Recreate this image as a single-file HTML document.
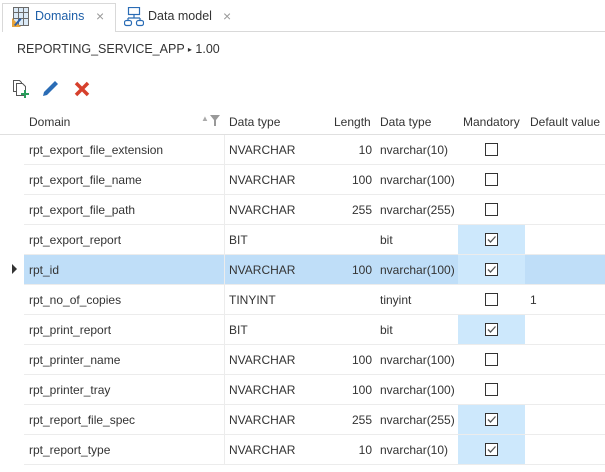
<!DOCTYPE html>
<html><head><meta charset="utf-8"><style>
*{margin:0;padding:0;box-sizing:border-box}
body{width:605px;height:472px;background:#fff;font-family:"Liberation Sans",sans-serif;font-size:12px;color:#333;position:relative;overflow:hidden}
.a{position:absolute;white-space:nowrap}
.row{position:absolute;left:24px;width:581px;height:30px;border-bottom:1px solid #ececec}
.row span{position:absolute;top:8px;white-space:nowrap}
.vl{position:absolute;left:224px;top:135px;width:1px;height:330px;background:#ececec}
.m{position:absolute;left:434px;width:67px;height:29px;background:#cde8fc}
.cb{position:absolute;left:461px;top:8px;width:13px;height:13px;border:1px solid #333;background:#fff}
.ck{position:absolute;left:1px;top:1px}
</style></head><body>
<!-- tabs -->
<div class="a" style="left:2px;top:3px;width:114px;height:29px;border:1px solid #d9d9d9;border-bottom:none;background:#fff"></div>
<div class="a" style="left:116px;top:31px;width:489px;height:1px;background:#d9d9d9"></div>
<svg class="a" style="left:11px;top:6px" width="20" height="22" viewBox="0 0 20 22">
<rect x="2.5" y="1.5" width="15" height="18" fill="#dbeaf7" stroke="#6a6a6a"/>
<line x1="7.5" y1="1.5" x2="7.5" y2="19.5" stroke="#6a6a6a"/><line x1="12.5" y1="1.5" x2="12.5" y2="19.5" stroke="#6a6a6a"/>
<line x1="2.5" y1="6.5" x2="17.5" y2="6.5" stroke="#6a6a6a"/><line x1="2.5" y1="12.5" x2="17.5" y2="12.5" stroke="#6a6a6a"/>
<path d="M1 21 L1 12 L10 21Z" fill="#e8a33a"/><path d="M3 19 L9 12 L10.5 13.5 L4.5 20Z" fill="#2a5fa8"/>
</svg>
<div class="a" style="left:35px;top:9px;color:#1e5fa8;font-size:12.5px">Domains</div>
<div class="a" style="left:96px;top:8px;color:#999;font-size:14px">×</div>
<svg class="a" style="left:124px;top:7px" width="20" height="20" viewBox="0 0 20 20" fill="none" stroke="#2a6cb5" stroke-width="1.2">
<rect x="4.5" y="0.5" width="11" height="7"/><path d="M10 7.5V11M4 11H16M4 11V13M16 11V13"/>
<rect x="0.5" y="13.5" width="7" height="5" rx="2"/><rect x="12.5" y="13.5" width="7" height="5" rx="2"/>
</svg>
<div class="a" style="left:148px;top:9px;font-size:12.5px">Data model</div>
<div class="a" style="left:223px;top:8px;color:#999;font-size:14px">×</div>
<!-- breadcrumb -->
<div class="a" style="left:17px;top:42px;font-size:12.5px">REPORTING_SERVICE_APP <span style="font-size:8px;position:relative;top:-1px">▸</span> 1.00</div>
<!-- toolbar -->
<svg class="a" style="left:11px;top:78px" width="20" height="20" viewBox="0 0 20 20" fill="none" stroke="#555">
<path d="M2.5 2.5H8.5L10.5 4.5V13.5H2.5Z"/><path d="M5.5 5.5H11.5L14.5 8.5V17.5H5.5Z" fill="#fff"/>
<path d="M14 12V20M10 16H18" stroke="#2a9d5c" stroke-width="2"/>
</svg>
<svg class="a" style="left:41px;top:78px" width="20" height="20" viewBox="0 0 20 20">
<path d="M2 18 L3 14 L14 3 L17 6 L6 17Z" fill="#2a6cb5"/>
</svg>
<svg class="a" style="left:73px;top:80px" width="18" height="18" viewBox="0 0 18 18">
<path d="M3 3L15 15M15 3L3 15" stroke="#d6402c" stroke-width="3.5"/>
</svg>
<!-- header -->
<div class="a" style="left:29px;top:115px">Domain</div>
<div class="a" style="left:201px;top:114px;color:#aaa;font-size:8px">▲</div>
<svg class="a" style="left:210px;top:115px" width="10" height="11" viewBox="0 0 10 11"><path d="M0 0H10L6 5V11H4V5Z" fill="#999"/></svg>
<div class="a" style="left:229px;top:115px">Data type</div>
<div class="a" style="left:334px;top:115px">Length</div>
<div class="a" style="left:380px;top:115px">Data type</div>
<div class="a" style="left:463px;top:115px">Mandatory</div>
<div class="a" style="left:530px;top:115px">Default value</div>
<div class="a" style="left:0;top:134px;width:605px;height:1px;background:#e0e0e0"></div>
<div class="vl"></div>
<!-- rows -->
<div class="row" style="top:135px"><span style="left:5px">rpt_export_file_extension</span><span style="left:205px">NVARCHAR</span><span style="right:233px">10</span><span style="left:356px">nvarchar(10)</span><div class="cb"></div></div>
<div class="row" style="top:165px"><span style="left:5px">rpt_export_file_name</span><span style="left:205px">NVARCHAR</span><span style="right:233px">100</span><span style="left:356px">nvarchar(100)</span><div class="cb"></div></div>
<div class="row" style="top:195px"><span style="left:5px">rpt_export_file_path</span><span style="left:205px">NVARCHAR</span><span style="right:233px">255</span><span style="left:356px">nvarchar(255)</span><div class="cb"></div></div>
<div class="row" style="top:225px"><div class="m" style="top:0"></div><span style="left:5px">rpt_export_report</span><span style="left:205px">BIT</span><span style="left:356px">bit</span><div class="cb"><svg class="ck" width="9" height="9" viewBox="0 0 9 9"><path d="M1 4.5L3.5 7L8.5 1.5" fill="none" stroke="#555" stroke-width="1.3"/></svg></div></div>
<div class="row" style="top:255px;background:#bfdef8"><div class="m" style="top:0"></div><span style="left:5px">rpt_id</span><span style="left:205px">NVARCHAR</span><span style="right:233px">100</span><span style="left:356px">nvarchar(100)</span><div class="cb"><svg class="ck" width="9" height="9" viewBox="0 0 9 9"><path d="M1 4.5L3.5 7L8.5 1.5" fill="none" stroke="#555" stroke-width="1.3"/></svg></div></div>
<div class="a" style="left:12px;top:264px;width:0;height:0;border-left:5px solid #333;border-top:5px solid transparent;border-bottom:5px solid transparent"></div>
<div class="row" style="top:285px"><span style="left:5px">rpt_no_of_copies</span><span style="left:205px">TINYINT</span><span style="left:356px">tinyint</span><div class="cb"></div><span style="left:506px">1</span></div>
<div class="row" style="top:315px"><div class="m" style="top:0"></div><span style="left:5px">rpt_print_report</span><span style="left:205px">BIT</span><span style="left:356px">bit</span><div class="cb"><svg class="ck" width="9" height="9" viewBox="0 0 9 9"><path d="M1 4.5L3.5 7L8.5 1.5" fill="none" stroke="#555" stroke-width="1.3"/></svg></div></div>
<div class="row" style="top:345px"><span style="left:5px">rpt_printer_name</span><span style="left:205px">NVARCHAR</span><span style="right:233px">100</span><span style="left:356px">nvarchar(100)</span><div class="cb"></div></div>
<div class="row" style="top:375px"><span style="left:5px">rpt_printer_tray</span><span style="left:205px">NVARCHAR</span><span style="right:233px">100</span><span style="left:356px">nvarchar(100)</span><div class="cb"></div></div>
<div class="row" style="top:405px"><div class="m" style="top:0"></div><span style="left:5px">rpt_report_file_spec</span><span style="left:205px">NVARCHAR</span><span style="right:233px">255</span><span style="left:356px">nvarchar(255)</span><div class="cb"><svg class="ck" width="9" height="9" viewBox="0 0 9 9"><path d="M1 4.5L3.5 7L8.5 1.5" fill="none" stroke="#555" stroke-width="1.3"/></svg></div></div>
<div class="row" style="top:435px"><div class="m" style="top:0"></div><span style="left:5px">rpt_report_type</span><span style="left:205px">NVARCHAR</span><span style="right:233px">10</span><span style="left:356px">nvarchar(10)</span><div class="cb"><svg class="ck" width="9" height="9" viewBox="0 0 9 9"><path d="M1 4.5L3.5 7L8.5 1.5" fill="none" stroke="#555" stroke-width="1.3"/></svg></div></div>
<div class="vl" style="background:#ececec"></div>
</body></html>
